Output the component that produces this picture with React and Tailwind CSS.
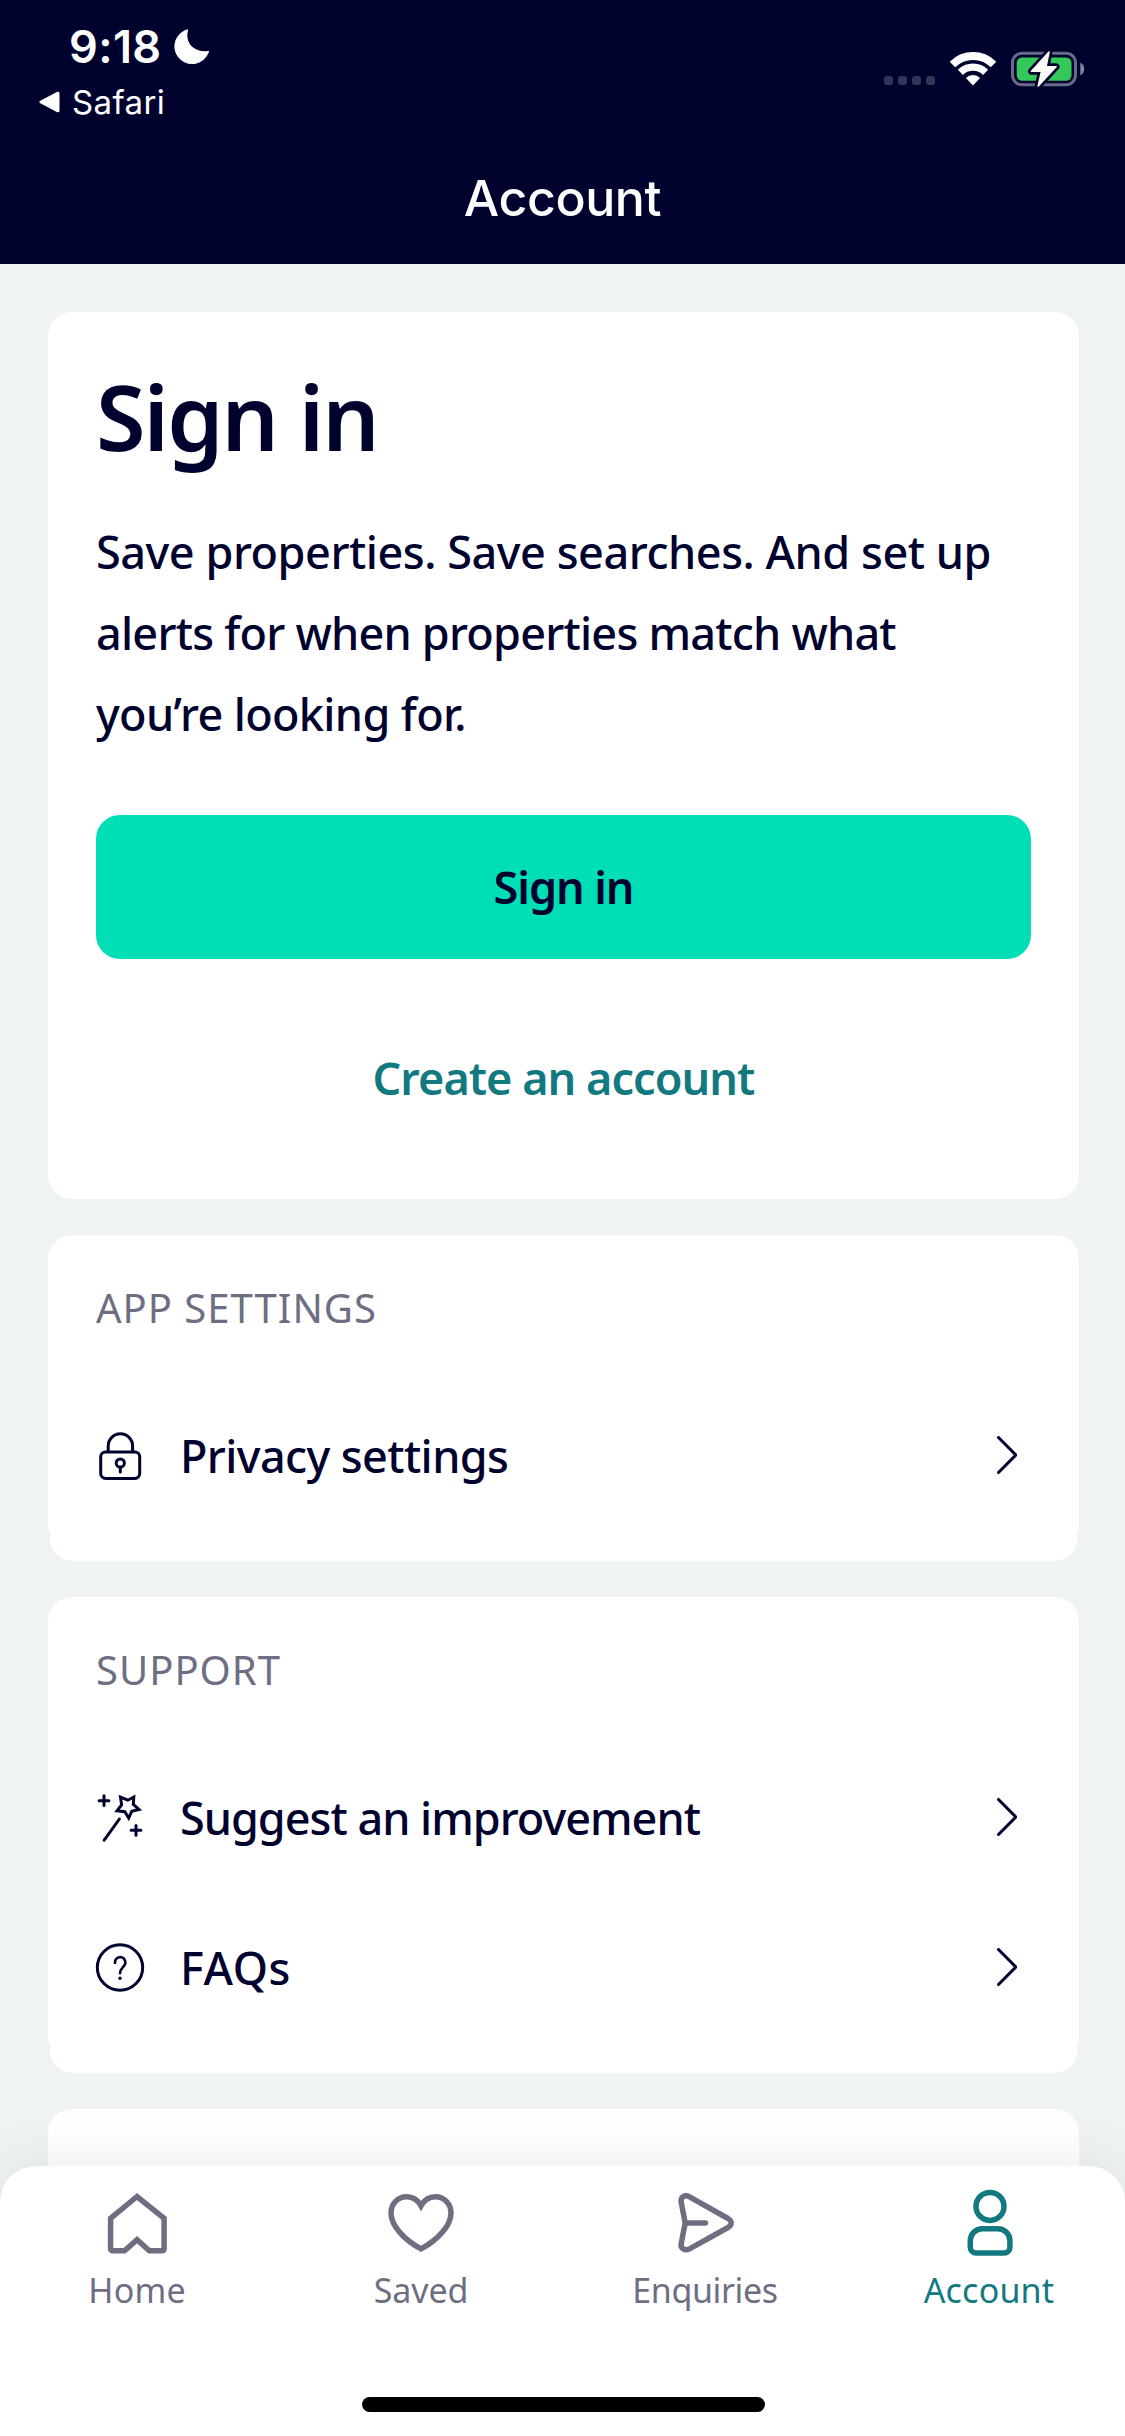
function Moon() {
  return (
    <svg width="36" height="36" viewBox="0 0 36 36" className="block">
      <path
        d="M13.6 .8A17.2 17.2 0 1 0 34.6 22.2C26 25 9 18 13.6 .8Z"
        fill="#fff"
        stroke="#fff"
        strokeWidth="1"
        strokeLinejoin="round"
      />
    </svg>
  );
}

function BackTriangle() {
  return (
    <svg width="21" height="22" viewBox="0 0 21 22" className="block">
      <path d="M2 11L19 2.2V19.8Z" fill="#fff" stroke="#fff" strokeWidth="3" strokeLinejoin="round" />
    </svg>
  );
}

function Wifi() {
  return (
    <svg width="46" height="34" viewBox="0 0 46 34" className="block">
      <g fill="none" stroke="#fff">
        <path d="M2.5 12.5A29 29 0 0 1 43.5 12.5" strokeWidth="7.8" />
        <path d="M10.4 20.4A17.8 17.8 0 0 1 35.6 20.4" strokeWidth="7.2" />
      </g>
      <path d="M23 33.5L15.9 26A10 10 0 0 1 30.1 26Z" fill="#fff" />
    </svg>
  );
}

function Battery() {
  return (
    <svg width="74" height="38" viewBox="0 0 74 38" className="block">
      <rect x="1.5" y="3.2" width="63" height="31.6" rx="9.5" fill="none" stroke="#686a8c" strokeWidth="3" />
      <path d="M69.3 12.7Q73.2 14.5 73.2 19T69.3 25.3Z" fill="#8486a0" />
      <rect x="5.7" y="7.4" width="54.8" height="23.4" rx="5.5" fill="#34c759" />
      <path
        d="M38 2L20.5 21.3H30.6L27.2 36L45 16.7H35Z"
        fill="#00022e"
        stroke="#00022e"
        strokeWidth="7"
        strokeLinejoin="round"
      />
      <path
        d="M38 2L20.5 21.3H30.6L27.2 36L45 16.7H35Z"
        fill="#fff"
        stroke="#fff"
        strokeWidth="1.6"
        strokeLinejoin="round"
      />
    </svg>
  );
}

function LineIcon({ children }) {
  return (
    <svg
      width="48"
      height="48"
      viewBox="0 0 48 48"
      fill="none"
      stroke="#00022e"
      strokeWidth="3"
      strokeLinecap="round"
      className="block shrink-0 overflow-visible"
    >
      {children}
    </svg>
  );
}

function LockIcon() {
  return (
    <LineIcon>
      <rect x="4.7" y="20.9" width="39" height="26.5" rx="4.8" />
      <path d="M12.2 20.5V15A12.2 12.2 0 0 1 36.6 15V20.5" />
      <circle cx="24.3" cy="32" r="4.1" />
      <path d="M24.3 36.5V41" />
    </LineIcon>
  );
}

function WandIcon() {
  return (
    <LineIcon>
      <path d="M8 2.8V12.6M3.1 7.7H12.9M40 32.4V42.2M35.1 37.3H44.9M23.4 26L8.2 47.2" />
      <path
        d="M24.5 4.2L31.8 7.2L37.8 4L37.3 11.3L43 16.5L35.8 18.2L32.7 25L28.8 18.7L21 17.8L25.6 11.8Z"
        strokeLinejoin="miter"
      />
    </LineIcon>
  );
}

function HelpIcon() {
  return (
    <LineIcon>
      <circle cx="24" cy="24.5" r="22.7" />
      <path d="M19 19.8A5.2 5.2 0 1 1 28.2 22.6C26.4 25 24 26.2 24 30.2" strokeWidth="2.6" />
      <circle cx="24" cy="35.2" r="1.7" fill="#00022e" stroke="none" />
    </LineIcon>
  );
}

function Chevron() {
  return (
    <svg width="20" height="38" viewBox="0 0 20 38" className="mr-[14px] ml-auto block">
      <path d="M1.5 1.5L18.8 19L1.5 36.5" fill="none" stroke="#00022e" strokeWidth="3" strokeLinecap="round" />
    </svg>
  );
}

function NavIcon({ children }) {
  return (
    <svg
      width="66"
      height="66"
      viewBox="0 0 66 66"
      fill="none"
      stroke="currentColor"
      strokeWidth="5.5"
      className="block overflow-visible"
    >
      {children}
    </svg>
  );
}

function NavItem({ label, active, icon, tracking }) {
  return (
    <div
      className={
        "flex w-[162px] flex-col items-center gap-[14px] " + (active ? "text-[#127980]" : "text-[#6e6e82]")
      }
    >
      <NavIcon>{icon}</NavIcon>
      <span className={"text-[34px] leading-[40px] whitespace-nowrap " + tracking}>{label}</span>
    </div>
  );
}

function Row({ icon, label, tracking }) {
  return (
    <div className="flex h-[150px] items-center">
      {icon}
      <span className={"ml-9 pt-[2px] text-[45px] leading-[60px] font-medium " + tracking}>{label}</span>
      <Chevron />
    </div>
  );
}

function Section({ title, children }) {
  return (
    <section>
      <div className="rounded-t-[24px] bg-white px-12 pt-[46px]">
        <h2 className="text-[40px] leading-[54px] tracking-[1px] text-[#6e6e82]">{title}</h2>
        <div className="pt-[45px]">{children}</div>
      </div>
      <div className="mx-[2px] h-[31px] rounded-b-[22px] bg-white" />
    </section>
  );
}

export default function App() {
  return (
    <div className="flex h-[2436px] w-[1125px] flex-col overflow-hidden bg-[#eff3f4] font-['Noto_Sans',sans-serif] text-[#00022e]">
      <header className="h-[264px] shrink-0 bg-[#00022e] font-['Inter',sans-serif] text-white">
        <div className="flex h-[168px] items-start justify-between pr-[40px] pl-[39px]">
          <div className="pt-[25px]">
            <div className="flex h-[44px] items-center gap-[12px] pl-[30px]">
              <span className="text-[45px] leading-[44px] font-semibold tracking-[0.4px]">9:18</span>
              <Moon />
            </div>
            <div className="mt-4 flex h-[34px] items-center gap-[12px]">
              <BackTriangle />
              <span className="text-[33px] leading-[34px] tracking-[0.4px]">Safari</span>
            </div>
          </div>
          <div className="flex items-center gap-[15px] pt-[50px]">
            <div className="flex gap-[5px] self-end pb-[3px]">
              <i className="h-[9px] w-[9px] rounded-[3px] bg-[#333558]" />
              <i className="h-[9px] w-[9px] rounded-[3px] bg-[#333558]" />
              <i className="h-[9px] w-[9px] rounded-[3px] bg-[#333558]" />
              <i className="h-[9px] w-[9px] rounded-[3px] bg-[#333558]" />
            </div>
            <Wifi />
            <Battery />
          </div>
        </div>
        <h1 className="text-center text-[50px] leading-[60px] font-medium tracking-[-0.4px]">Account</h1>
      </header>

      <main className="flex min-h-0 flex-1 flex-col gap-9 overflow-hidden pt-12 pr-[46px] pl-12">
        <section className="h-[887px] shrink-0 rounded-[24px] bg-white px-12 pt-[59px]">
          <h2 className="text-[90px] leading-[90px] font-semibold tracking-[-1.9px]">Sign in</h2>
          <p className="mt-[50px] text-[45px] leading-[81px] font-medium whitespace-nowrap">
            <span className="block tracking-[-0.46px]">Save properties. Save searches. And set up</span>
            <span className="block tracking-[-0.77px]">alerts for when properties match what</span>
            <span className="block tracking-[-0.65px]">you’re looking for.</span>
          </p>
          <button className="mt-[61px] block h-[144px] w-full rounded-[24px] bg-[#00deb6] text-[45px] font-semibold tracking-[-1.1px]">
            Sign in
          </button>
          <button className="mt-[47px] block h-[144px] w-full text-[45px] font-semibold tracking-[-0.95px] text-[#127980]">
            Create an account
          </button>
        </section>

        <Section title="APP SETTINGS">
          <Row icon={<LockIcon />} label="Privacy settings" tracking="tracking-[-0.6px]" />
        </Section>

        <Section title="SUPPORT">
          <Row icon={<WandIcon />} label="Suggest an improvement" tracking="tracking-[-1px]" />
          <Row icon={<HelpIcon />} label="FAQs" tracking="tracking-[0.6px]" />
        </Section>

        <section className="h-[200px] shrink-0 rounded-[24px] bg-white" />
      </main>

      <nav className="relative z-10 flex h-[270px] shrink-0 flex-col items-center rounded-t-[36px] bg-white pt-6 shadow-[0_6px_72px_-6px_rgba(0,0,0,0.12)]">
        <div className="flex w-full justify-between pr-[55px] pl-[56px]">
          <NavItem
            label="Home"
            tracking="tracking-[0.2px]"
            icon={
              <path d="M33 6.5L6.6 28.3V58.2Q6.6 60.8 9.2 60.8H20.6L33 49.7L45.4 60.8H57.5Q60.1 60.8 60.1 58.2V28.3Z" />
            }
          />
          <NavItem
            label="Saved"
            tracking="tracking-[-0.1px]"
            icon={
              <path d="M33 15.8C29.5 9.5 24.5 6.8 18.5 6.8C9.5 6.8 3 14 3 23C3 36 17 50.5 33 58.9C49 50.5 63 36 63 23C63 14 56.5 6.8 47.5 6.8C41.5 6.8 36.5 9.5 33 15.8Z" />
            }
          />
          <NavItem
            label="Enquiries"
            tracking="tracking-[-0.4px]"
            icon={
              <path
                d="M17.5 6.8L56 28.5Q59.2 30.4 59.2 33Q59.2 35.6 56 37.5L17.5 58.8C13 61.3 8.2 58.5 9.2 53.5L13.2 33L9.2 12.2C8.2 7 13 4.2 17.5 6.8ZM13.2 33H33.5"
                strokeLinecap="round"
                strokeLinejoin="round"
              />
            }
          />
          <NavItem
            label="Account"
            tracking="tracking-[0.2px]"
            active
            icon={
              <>
                <circle cx="34" cy="16.4" r="14" />
                <path d="M26.3 38.8H41.9A12 12 0 0 1 53.9 50.8V57.2A5.8 5.8 0 0 1 48.1 63H20.1A5.8 5.8 0 0 1 14.3 57.2V50.8A12 12 0 0 1 26.3 38.8Z" />
              </>
            }
          />
        </div>
        <div className="mt-auto mb-6 ml-[2px] h-[15px] w-[403px] rounded-full bg-black" />
      </nav>
    </div>
  );
}
